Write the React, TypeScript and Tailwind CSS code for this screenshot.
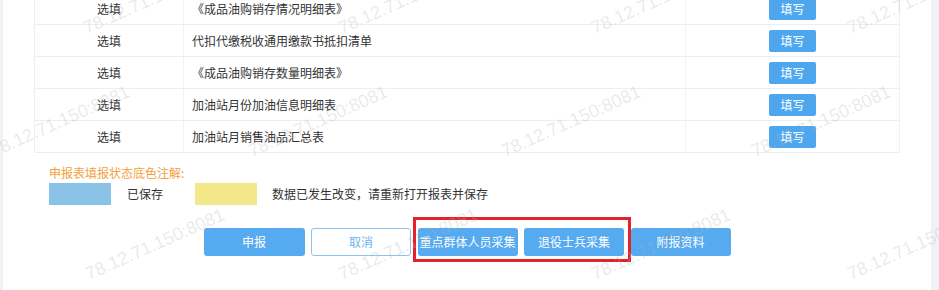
import React from 'react'

const rows = [
  { need: '选填', name: '《成品油购销存情况明细表》' },
  { need: '选填', name: '代扣代缴税收通用缴款书抵扣清单' },
  { need: '选填', name: '《成品油购销存数量明细表》' },
  { need: '选填', name: '加油站月份加油信息明细表' },
  { need: '选填', name: '加油站月销售油品汇总表' },
]

// watermark start points (lower-left corner of the text)
const marks = [
  [88, 37], [343, 37], [596, 37], [852, 37],
  [-5, 160], [253, 160], [506, 160], [756, 160],
  [90, 283], [343, 283], [596, 283], [852, 283],
]

const font = { fontFamily: '"Microsoft YaHei", "Noto Sans CJK SC", "Noto Sans", sans-serif' }

export default function App() {
  return (
    <div className="relative flex h-[290px] w-full overflow-hidden bg-[#f0f2f5]" style={font}>
      {/* main panel */}
      <div className="ml-[3px] flex w-[928px] flex-col bg-white">
        {/* table */}
        <div className="mx-[31px] -mt-[7px] border-x border-[#f0f0f0] text-[12px] text-[#333]">
          {rows.map((r, i) => (
            <div key={i} className="flex h-[32px] items-center border-b border-[#eeeeee]">
              <div className="flex h-full w-[148px] items-center justify-center">{r.need}</div>
              <div className="flex h-full w-[502px] items-center border-l border-[#f4f4f4] pl-[8px]">
                {r.name}
              </div>
              <div className="flex h-full flex-1 items-center justify-center border-l border-[#f4f4f4]">
                <button className="h-[22px] w-[47px] rounded-[2px] bg-[#4ea6ef] text-[12px] text-white">
                  填写
                </button>
              </div>
            </div>
          ))}
        </div>

        {/* legend */}
        <div className="ml-[46px] mt-[12px] text-[12px] leading-[16px] text-[#f5a03c]">
          申报表填报状态底色注解:
        </div>
        <div className="ml-[46px] mt-[2px] flex items-center text-[12px] text-[#333]">
          <span className="h-[22px] w-[62px] bg-[#8bc3e7]" />
          <span className="ml-[16px]">已保存</span>
          <span className="ml-[32px] h-[22px] w-[62px] bg-[#f3e78b]" />
          <span className="ml-[15px]">数据已发生改变，请重新打开报表并保存</span>
        </div>

        {/* actions */}
        <div className="mt-[23px] flex justify-center gap-[6.5px] text-[12px]">
          <button className="h-[28px] w-[101px] rounded-[3px] bg-[#55aaf0] text-white">申报</button>
          <button className="h-[28px] w-[100px] rounded-[3px] border border-[#8cc4ef] bg-white text-[#6fb3ea]">
            取消
          </button>
          <div className="relative flex gap-[6.5px]">
            <button className="h-[28px] w-[100px] rounded-[3px] bg-[#55aaf0] text-white">重点群体人员采集</button>
            <button className="h-[28px] w-[100px] rounded-[3px] bg-[#55aaf0] text-white">退役士兵采集</button>
            <span className="pointer-events-none absolute -top-[11px] -bottom-[6px] -left-[5px] -right-[7px] border-[3px] border-[#e3222b]" />
          </div>
          <button className="h-[28px] w-[100px] rounded-[3px] bg-[#55aaf0] text-white">附报资料</button>
        </div>
      </div>

      {/* watermark */}
      {marks.map(([x, y], i) => (
        <span
          key={i}
          className="pointer-events-none absolute origin-bottom-left -rotate-[24deg] whitespace-nowrap text-[18px] leading-[18px] text-[rgba(180,180,180,0.28)]"
          style={{ left: x, top: y - 18, fontFamily: '"Liberation Sans", Arial, sans-serif' }}
        >
          78.12.71.150:8081
        </span>
      ))}
    </div>
  )
}
